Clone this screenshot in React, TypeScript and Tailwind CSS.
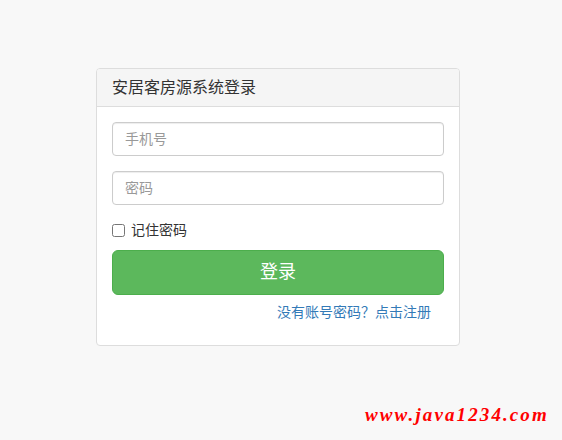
import React from 'react';

const App = () => {
  return (
    <div
      className="min-h-[440px] w-full bg-[#f8f8f8] pt-[68px] pl-[96px] relative"
      style={{ fontFamily: '"Liberation Sans", "Noto Sans CJK SC", sans-serif' }}
    >
      <div className="w-[364px] bg-white border border-[#dddddd] rounded-[4px]">
        <div className="h-[38px] px-[15px] flex items-center bg-[#f5f5f5] border-b border-[#dddddd] rounded-t-[3px] text-[16px] text-[#333333]">
          安居客房源系统登录
        </div>
        <div className="px-[15px] pt-[15px] pb-[22px] flex flex-col">
          <input
            type="text"
            placeholder="手机号"
            className="h-[34px] w-full px-[12px] text-[14px] border border-[#cccccc] rounded-[4px] placeholder:text-[#999999] shadow-[inset_0_1px_1px_rgba(0,0,0,0.075)] outline-none"
          />
          <input
            type="password"
            placeholder="密码"
            className="mt-[15px] h-[34px] w-full px-[12px] text-[14px] border border-[#cccccc] rounded-[4px] placeholder:text-[#999999] shadow-[inset_0_1px_1px_rgba(0,0,0,0.075)] outline-none"
          />
          <label className="mt-[14px] flex items-center gap-[6px] text-[14px] text-[#333333] h-[22px]">
            <input type="checkbox" className="w-[13px] h-[13px] m-0" />
            记住密码
          </label>
          <button className="mt-[9px] h-[45px] w-full rounded-[6px] bg-[#5cb85c] border border-[#4cae4c] text-white text-[18px]">
            登录
          </button>
          <div className="mt-[7px] flex justify-end pr-[13px]">
            <a href="#" className="text-[14px] text-[#337ab7]">
              没有账号密码？点击注册
            </a>
          </div>
        </div>
      </div>
      <div
        className="absolute left-[365px] top-[405px] text-[19px] font-bold italic text-[#ff0000] leading-none tracking-[2.1px]"
        style={{ fontFamily: '"Liberation Serif", serif' }}
      >
        www.java1234.com
      </div>
    </div>
  );
};

export default App;
